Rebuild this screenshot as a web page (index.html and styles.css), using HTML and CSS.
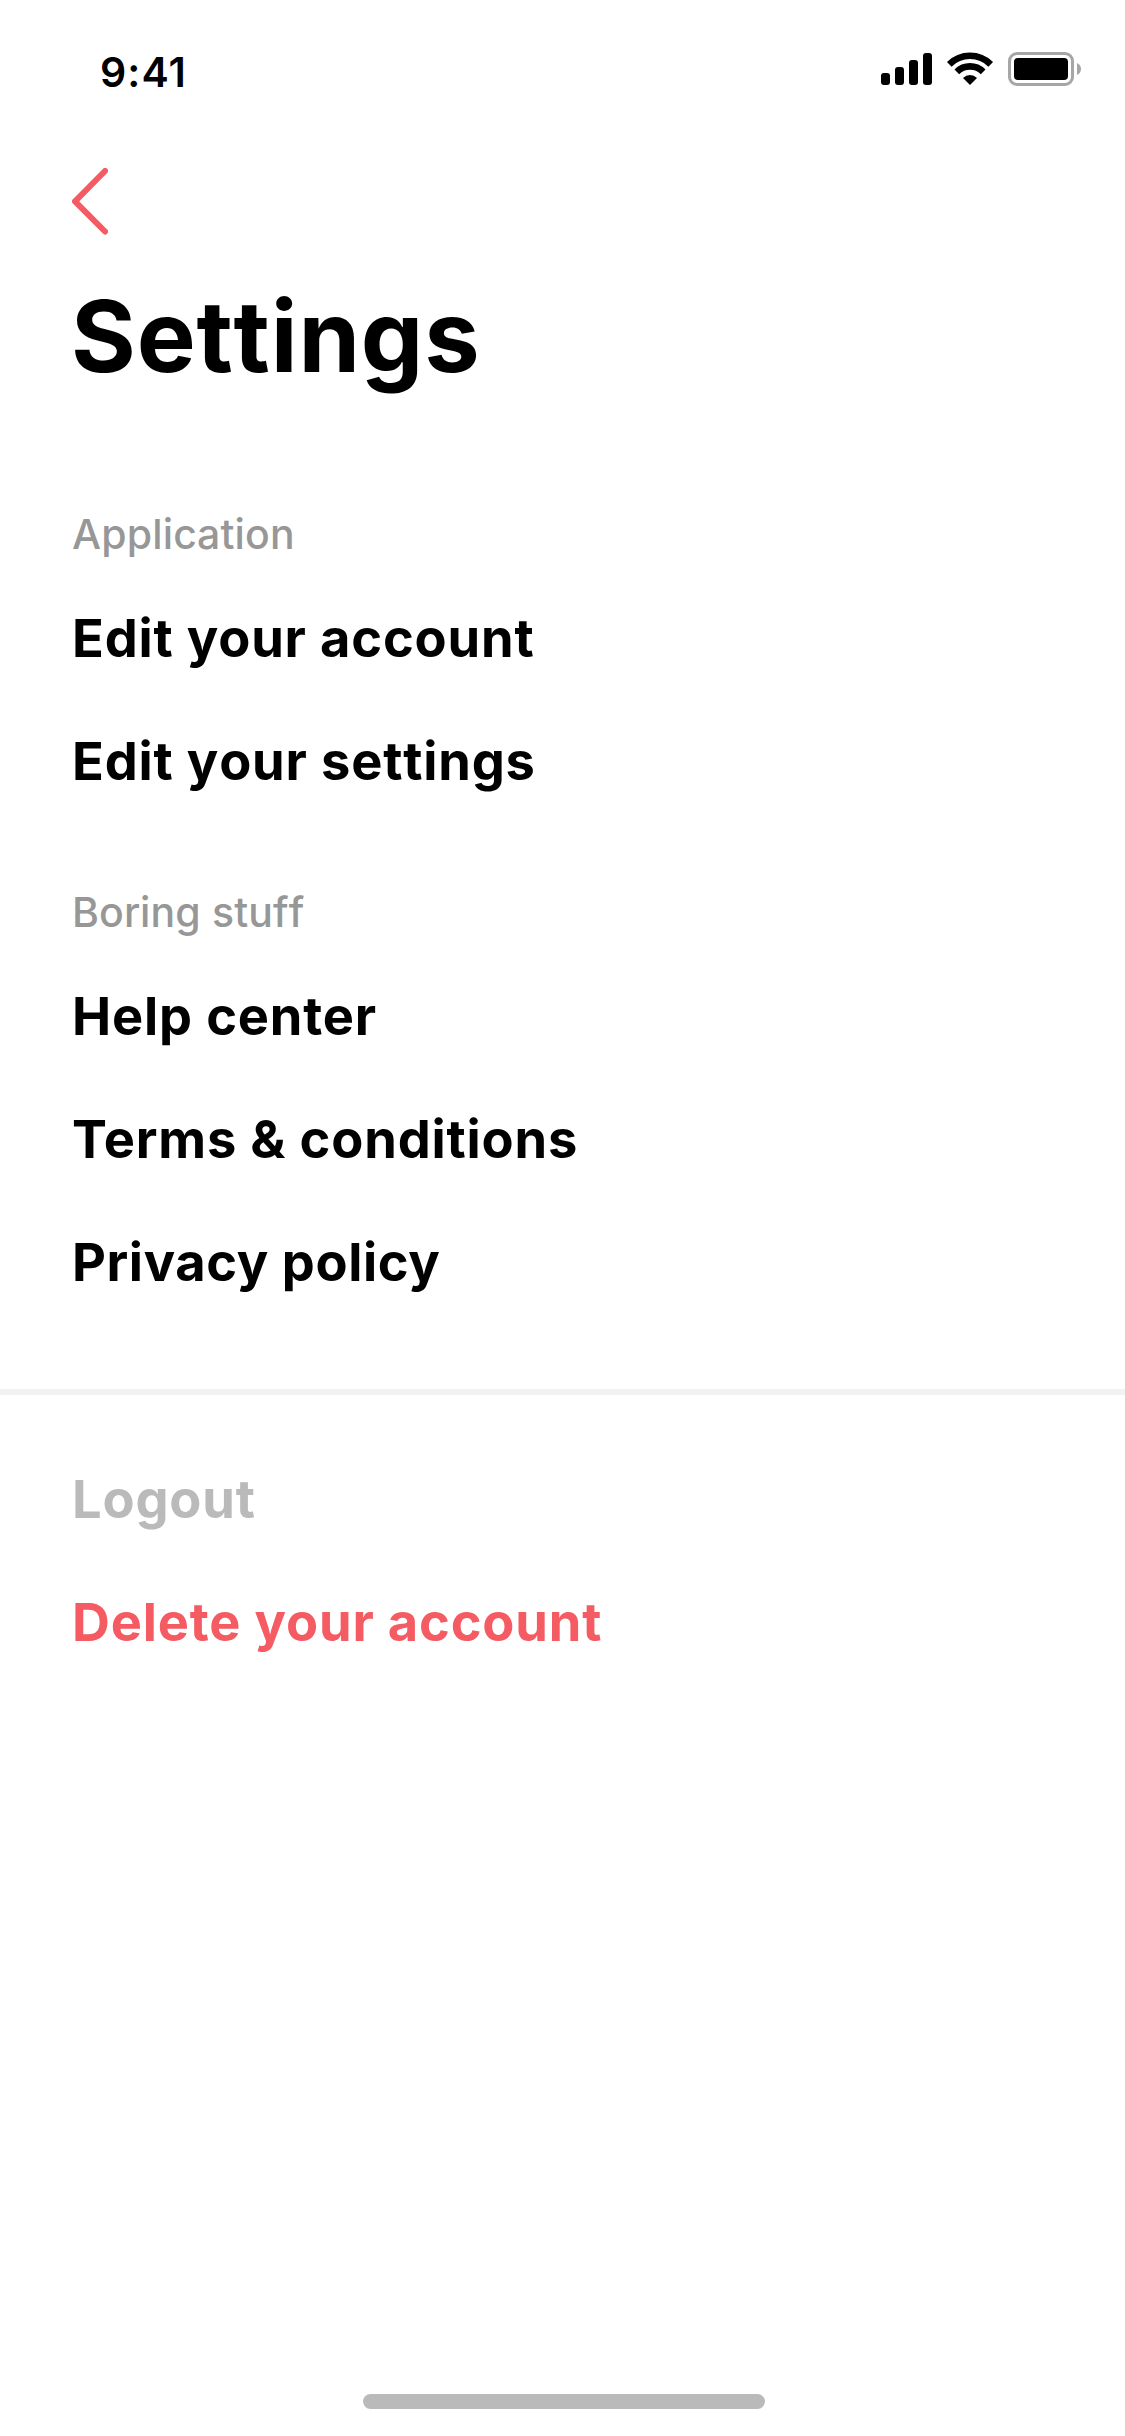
FILE: index.html
```
<!DOCTYPE html>
<html lang="en">
<head>
  <meta charset="utf-8">
  <title>Settings</title>
  <link rel="stylesheet" href="styles.css">
</head>
<body>
  <div class="screen">
    <header class="status-bar">
      <span class="status-time">9:41</span>
      <svg class="status-icons" width="204" height="40" viewBox="878 48 204 40" aria-hidden="true">
        <rect x="881" y="73" width="9" height="12" rx="3"/>
        <rect x="895" y="67" width="9" height="18" rx="3"/>
        <rect x="909" y="60" width="9" height="25" rx="3"/>
        <rect x="923" y="53" width="9" height="32" rx="3"/>
        <path class="wifi-arc" d="M949.300 64.300A29.300 29.300 0 0 1 990.700 64.300"/>
        <path class="wifi-arc" d="M956.850 71.850A18.600 18.600 0 0 1 983.150 71.850"/>
        <path d="M963 77.900A10 10 0 0 1 977 77.900L970 85z"/>
        <rect class="battery-case" x="1009.500" y="53.500" width="63" height="31" rx="7.500"/>
        <rect x="1014" y="58" width="54" height="22" rx="4"/>
        <path class="battery-cap" d="M1077 63c2.400 1 4 3.300 4 6s-1.600 5-4 6z"/>
      </svg>
    </header>
    <main class="content">
      <a class="back" href="#" aria-label="Back">
        <svg width="36" height="67" viewBox="0 0 36 67"><path d="M33 3 3 33.300 33 63.500"/></svg>
      </a>
      <h1 class="title">Settings</h1>
      <section class="group">
        <h2 class="group-label">Application</h2>
        <a class="item" href="#">Edit your account</a>
        <a class="item item-unkerned" href="#">Edit your settings</a>
      </section>
      <section class="group">
        <h2 class="group-label">Boring stuff</h2>
        <a class="item" href="#">Help center</a>
        <a class="item" href="#">Terms &amp; conditions</a>
        <a class="item item-tight" href="#">Privacy policy</a>
      </section>
    </main>
    <footer class="account-actions">
      <a class="item item-muted" href="#">Logout</a>
      <a class="item item-danger" href="#">Delete your account</a>
    </footer>
    <div class="home-indicator"></div>
  </div>
</body>
</html>
```
FILE: styles.css
```
* { box-sizing: border-box; margin: 0; }
body { background: #fff; color: #000; font-family: Inter, "Liberation Sans", sans-serif; }
a { color: inherit; text-decoration: none; }
svg { display: block; }

.screen { display: flex; flex-direction: column; width: 1125px; height: 2436px; }

.status-bar {
  display: flex;
  justify-content: space-between;
  align-items: flex-start;
  height: 132px;
  padding: 47px 43px 0 100px;
}
.status-time { font-size: 41px; line-height: 50px; font-weight: 600; letter-spacing: 1.100px; }
.status-icons { margin-top: 1px; }
.wifi-arc { fill: none; stroke: #000; stroke-width: 6.600; }
.battery-case { fill: none; stroke: #a6a6a6; stroke-width: 3; }
.battery-cap { fill: #a6a6a6; }

.content { padding: 36px 72px 95px; }
.back { display: block; width: 36px; height: 67px; }
.back path { fill: none; stroke: #f45b63; stroke-width: 6; stroke-linecap: round; stroke-linejoin: round; }
.title {
  margin: 41px 0 19px -1px;
  font-size: 99px;
  line-height: 120px;
  font-weight: 700;
  font-kerning: none;
  letter-spacing: .850px;
}

.group { display: flex; flex-direction: column; align-items: flex-start; padding-top: 94px; }
.group-label {
  margin-bottom: 47px;
  color: #979797;
  font-size: 41px;
  line-height: 50px;
  font-weight: 500;
  font-kerning: none;
  letter-spacing: .150px;
}
.item { font-size: 52.400px; line-height: 64px; font-weight: 700; letter-spacing: .830px; white-space: nowrap; }
.item + .item { margin-top: 59px; }
.item-unkerned { font-kerning: none; }
.item-tight { letter-spacing: .600px; }

.account-actions { display: flex; flex-direction: column; align-items: flex-start; padding: 72px 72px 0; border-top: 6px solid #f2f2f2; }
.item-muted { color: #bababa; }
.item-danger { color: #f45b63; }

.home-indicator { align-self: center; width: 402px; height: 15px; margin: auto 0 27px 3px; border-radius: 8px; background: #bababa; }
```
